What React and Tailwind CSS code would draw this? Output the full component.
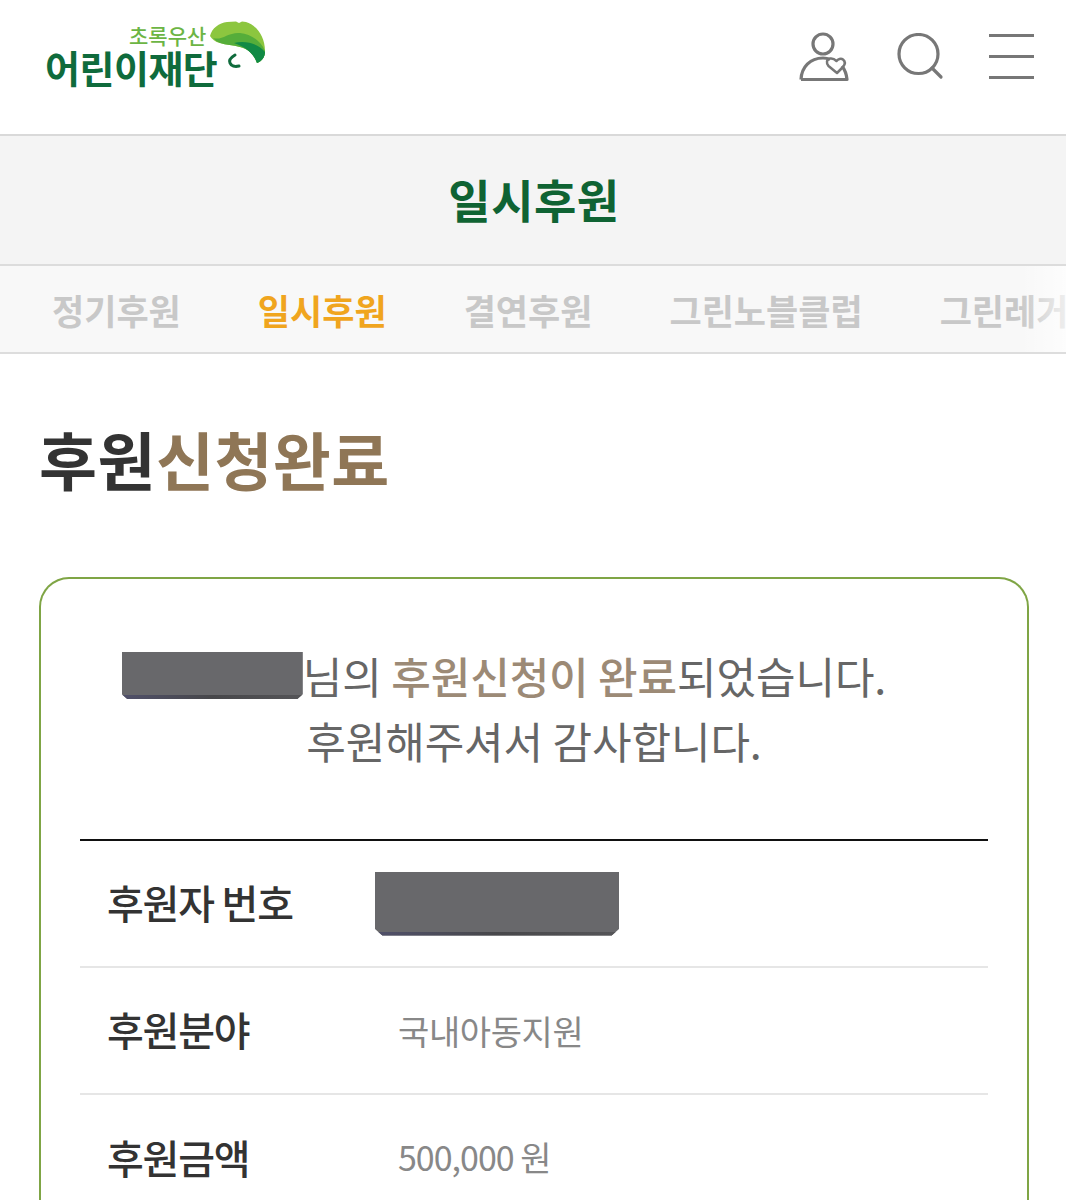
import React from 'react';

const KR = "font-['Noto_Sans_CJK_KR','Noto_Sans',sans-serif]";

const tabs = ['정기후원', '일시후원', '결연후원', '그린노블클럽', '그린레거시'];

const Logo = () => (
    <div className="flex items-start">
        <div className="flex flex-col items-end">
            <span className="mt-[2px] text-[21px] leading-[24px] font-medium text-[#6cb544] mr-[11px]">초록우산</span>
            <span className="mt-[1px] text-[38px] leading-[38px] font-bold tracking-[-0.5px] text-[#0f6b3c]">어린이재단</span>
        </div>
        <svg className="-ml-[7px]" width="56" height="52" viewBox="0 0 56 52">
            <path d="M0 15C2 7 9 2 17 1L26 0.500L29 2L32 0.500L36 1C46 4 55 15 55 30C55 36 52 40 47 42C44 33 38 28 30 26C23 24 16 24 10 22C5 21 2 18 0 15Z" fill="#8cc63f" />
            <path d="M3 17C12 20 18 11 30 12C41 13 51 20 55 30C55 36 52 40 47 42C44 33 38 28 30 26C23 24 16 24 10 22C7 21 5 19 3 17Z" fill="#55ad3a" />
            <path d="M24 22C36 19 49 23 55 31C55 36 52 40 47 42C44 33 36 26 24 22Z" fill="#118a45" />
            <path d="M25 34C20 37 19 40 20 42C21 45 25 46 29 45" fill="none" stroke="#0f6b3c" strokeWidth="3" strokeLinecap="round" />
        </svg>
    </div>
);

const UserHeartIcon = () => (
    <svg className="mr-[4px]" width="50" height="52" viewBox="0 0 50 52" fill="none" stroke="#777" strokeWidth="3.200">
        <circle cx="24" cy="13" r="10" />
        <path d="M2 48.500H48C47.500 43 46 39 43 35M2 48.500C2.500 36 11 27 24 27C27 27 29 27.500 31 28.500" strokeLinejoin="round" />
        <path d="M40 44L31.500 37C29 34.500 29.500 30 33 29.500C35.500 29 37.500 30 39.500 32C41 30 44 29 46 30.500C48.500 32.500 48 35.500 46 38Z" transform="translate(-2 -2)" strokeWidth="2.500" strokeLinejoin="round" />
    </svg>
);

const SearchIcon = () => (
    <svg width="48" height="48" viewBox="0 0 48 48" fill="none" stroke="#777" strokeWidth="3.200">
        <circle cx="21.500" cy="21" r="19.500" />
        <path d="M35 35L44 44" strokeLinecap="round" />
    </svg>
);

const MenuIcon = () => (
    <div className="flex flex-col gap-[18px] w-[45px]">
        <span className="h-[3px] bg-[#777]" />
        <span className="h-[3px] bg-[#777]" />
        <span className="h-[3px] bg-[#777]" />
    </div>
);

const Redacted = ({ className }) => (
    <span className={`inline-flex flex-col bg-[#68686b] [clip-path:polygon(0_0,100%_0,100%_90%,97%_100%,3%_100%,0_90%)] ${className}`}>
        <span className="flex-1" />
        <span className="h-[4px] bg-gradient-to-r from-[#50506a] via-[#47474a] to-[#555558]" />
    </span>
);

const Row = ({ label, children, last }) => (
    <div className={`flex items-center h-[127px] pl-[27px] ${last ? '' : 'border-b-2 border-[#e6e6e6]'}`}>
        <span className="w-[291px] shrink-0 pb-[3px] text-[40px] leading-none font-medium tracking-[-1.2px] text-[#333]">{label}</span>
        {children}
    </div>
);

export default function App() {
    return (
        <div className={`h-[1200px] overflow-hidden bg-white ${KR}`}>
            {/* Header */}
            <header className="flex items-center justify-between h-[136px] pl-[45px] pr-[32px] pb-[27px] border-b-2 border-[#d9d9d9]">
                <Logo />
                <div className="flex items-center gap-[44px] pt-[6px]">
                    <UserHeartIcon />
                    <SearchIcon />
                    <MenuIcon />
                </div>
            </header>

            {/* Title band */}
            <div className="flex items-center justify-center h-[130px] pb-[4px] pl-[2px] bg-[#f4f4f4] border-b-2 border-[#dcdcdc]">
                <h1 className="text-[46px] leading-none font-bold tracking-[0.5px] text-[#0f6333]">일시후원</h1>
            </div>

            {/* Tabs */}
            <nav className="relative h-[88px] bg-[#f8f8f8] border-b-2 border-[#dddddd] overflow-hidden">
                <ul className="flex items-center gap-[77px] h-full pl-[52px] whitespace-nowrap">
                    {tabs.map((t, i) => (
                        <li key={t} className={`text-[35px] leading-none font-bold ${i === 1 ? 'text-[#f0a51e]' : 'text-[#c8c8c8]'}`}>{t}</li>
                    ))}
                </ul>
                <div className="absolute inset-y-0 right-0 w-[46px] bg-gradient-to-r from-transparent to-white/70" />
            </nav>

            <main className="pl-[39px] pr-[37px]">
                <h2 className="mt-[66px] text-[63px] leading-[76px] font-bold tracking-[0.5px] text-[#333]">
                    후원<span className="text-[#8f7656]">신청완료</span>
                </h2>

                <section className="mt-[81px] rounded-t-[30px] border-2 border-b-0 border-[#7fa545] px-[39px] pt-[64px]">
                    <div className="text-center text-[43px] leading-[65px] font-normal tracking-[-0.1px] text-[#666]">
                        <p className="pr-[60px] flex items-center justify-center whitespace-nowrap">
                            <Redacted className="w-[181px] h-[47px]" />
                            <span>님의 <span className="font-medium text-[#9c8a76]">후원신청이 완료</span>되었습니다.</span>
                        </p>
                        <p>후원해주셔서 감사합니다.</p>
                    </div>

                    <div className="mt-[66px] border-t-2 border-[#111]">
                        <Row label="후원자 번호">
                            <Redacted className="w-[244px] h-[64px] -ml-[23px]" />
                        </Row>
                        <Row label="후원분야">
                            <span className="text-[34px] leading-none font-normal tracking-[-0.4px] text-[#888]">국내아동지원</span>
                        </Row>
                        <Row label="후원금액" last>
                            <span className="pb-[3px] text-[34px] leading-none font-normal tracking-[-1px] text-[#888]">500,000 원</span>
                        </Row>
                    </div>
                </section>
            </main>
        </div>
    );
}
